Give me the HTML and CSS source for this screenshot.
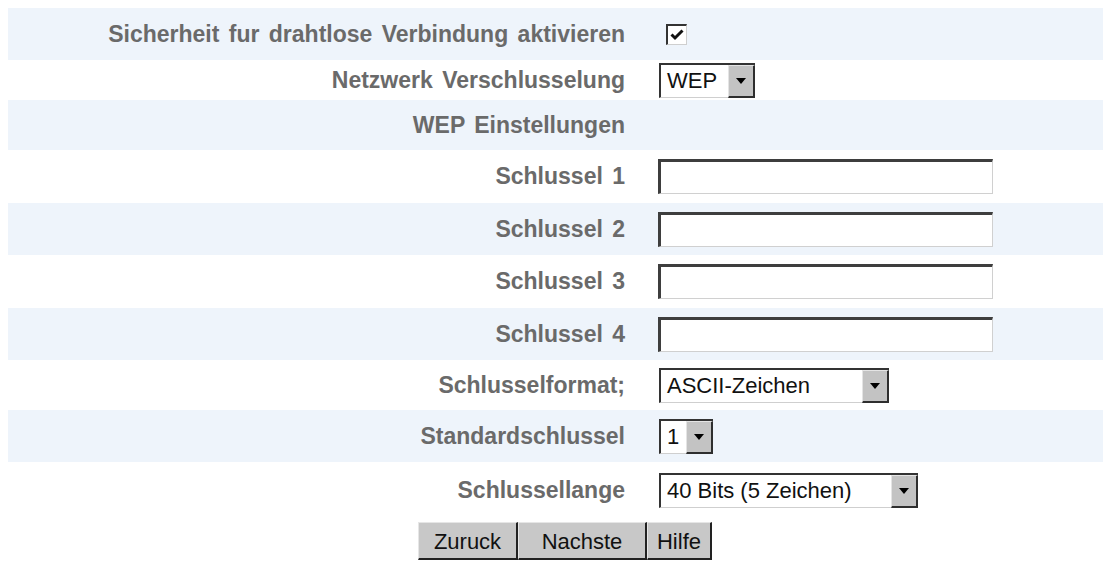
FILE: index.html
```html
<!DOCTYPE html>
<html lang="de">
<head>
<meta charset="utf-8">
<title>WEP Einstellungen</title>
<link rel="stylesheet" href="styles.css">
</head>
<body>
<div class="form">
  <div class="row shade h52">
    <div class="label">Sicherheit fur drahtlose Verbindung aktivieren</div>
    <div class="ctrl">
      <span class="checkbox"><svg width="14" height="12" viewBox="0 0 14 12"><path d="M1.5 5.5 L5 9 L12.5 1.5" fill="none" stroke="#111" stroke-width="3"/></svg></span>
    </div>
  </div>
  <div class="row h40">
    <div class="label">Netzwerk Verschlusselung</div>
    <div class="ctrl">
      <div class="select w96"><span class="val">WEP</span><span class="arrow"><i></i></span></div>
    </div>
  </div>
  <div class="row shade h50">
    <div class="label">WEP Einstellungen</div>
    <div class="ctrl"></div>
  </div>
  <div class="row h53">
    <div class="label">Schlussel 1</div>
    <div class="ctrl"><input class="text" type="text"></div>
  </div>
  <div class="row shade h52">
    <div class="label">Schlussel 2</div>
    <div class="ctrl"><input class="text" type="text"></div>
  </div>
  <div class="row h53">
    <div class="label">Schlussel 3</div>
    <div class="ctrl"><input class="text" type="text"></div>
  </div>
  <div class="row shade h52">
    <div class="label">Schlussel 4</div>
    <div class="ctrl"><input class="text" type="text"></div>
  </div>
  <div class="row h50">
    <div class="label">Schlusselformat;</div>
    <div class="ctrl">
      <div class="select w230"><span class="val">ASCII-Zeichen</span><span class="arrow"><i></i></span></div>
    </div>
  </div>
  <div class="row shade h52">
    <div class="label">Standardschlussel</div>
    <div class="ctrl">
      <div class="select w54"><span class="val">1</span><span class="arrow"><i></i></span></div>
    </div>
  </div>
  <div class="row h56">
    <div class="label">Schlussellange</div>
    <div class="ctrl">
      <div class="select w259"><span class="val">40 Bits (5 Zeichen)</span><span class="arrow"><i></i></span></div>
    </div>
  </div>
  <div class="buttons">
    <button class="btn b1" type="button">Zuruck</button><button class="btn b2" type="button">Nachste</button><button class="btn b3" type="button">Hilfe</button>
  </div>
</div>
</body>
</html>
```
FILE: styles.css
```css
body {
  margin: 8px;
  background: #ffffff;
  font-family: "Liberation Sans", Arial, sans-serif;
}
.form {
  width: 1095px;
}
.row {
  display: grid;
  grid-template-columns: 617px 1fr;
  column-gap: 33px;
  align-items: center;
}
.shade { background: #eef4fb; }
.h40 { height: 40px; }
.h50 { height: 50px; }
.h52 { height: 52px; }
.h53 { height: 53px; }
.h56 { height: 56px; }
.label {
  text-align: right;
  font-weight: bold;
  font-size: 23px;
  word-spacing: 3px;
  color: #6a6a6a;
  white-space: nowrap;
}
.ctrl {
  display: flex;
  align-items: center;
}
.checkbox {
  box-sizing: border-box;
  width: 21px;
  height: 21px;
  margin-left: 8px;
  background: #fff;
  border-top: 2px solid #333;
  border-left: 2px solid #333;
  border-right: 1px solid #cfcfcf;
  border-bottom: 1px solid #cfcfcf;
  display: flex;
  align-items: center;
  justify-content: center;
}
.select {
  box-sizing: border-box;
  height: 35px;
  display: flex;
  background: #fff;
  border-top: 2px solid #333;
  border-left: 2px solid #333;
  border-bottom: 1px solid #cfcfcf;
  margin-left: 1px;
}
.w96 { width: 96px; }
.w230 { width: 230px; }
.w54 { width: 54px; }
.w259 { width: 259px; }
.val {
  flex: 1;
  font-size: 22px;
  color: #111;
  line-height: 32px;
  padding-left: 6px;
  white-space: nowrap;
}
.arrow {
  box-sizing: border-box;
  width: 27px;
  background: #c3c3c3;
  border-top: 1px solid #e4e4e4;
  border-left: 1px solid #e4e4e4;
  border-right: 2px solid #2e2e2e;
  border-bottom: 2px solid #2e2e2e;
  display: flex;
  align-items: center;
  justify-content: center;
  margin-bottom: -1px;
}
.arrow i {
  width: 0;
  height: 0;
  border-left: 5px solid transparent;
  border-right: 5px solid transparent;
  border-top: 6px solid #000;
}
.text {
  box-sizing: border-box;
  width: 335px;
  height: 35px;
  margin: 0;
  padding: 0;
  background: #fff;
  border-top: 3px solid #3e3e3e;
  border-left: 3px solid #3e3e3e;
  border-right: 1px solid #d0d0d0;
  border-bottom: 1px solid #d0d0d0;
  outline: none;
}
.buttons {
  display: flex;
  padding-left: 410px;
  padding-top: 4px;
}
.btn {
  box-sizing: border-box;
  height: 38px;
  margin: 0;
  padding: 2px 0 0;
  background: #c8c8c8;
  font-family: "Liberation Sans", Arial, sans-serif;
  font-size: 22px;
  color: #111;
  border-top: 1px solid #e6e6e6;
  border-left: 1px solid #e6e6e6;
  border-right: 2px solid #222;
  border-bottom: 2px solid #222;
  border-radius: 0;
}
.b1 { width: 100px; }
.b2 { width: 129px; }
.b3 { width: 65px; }
```
